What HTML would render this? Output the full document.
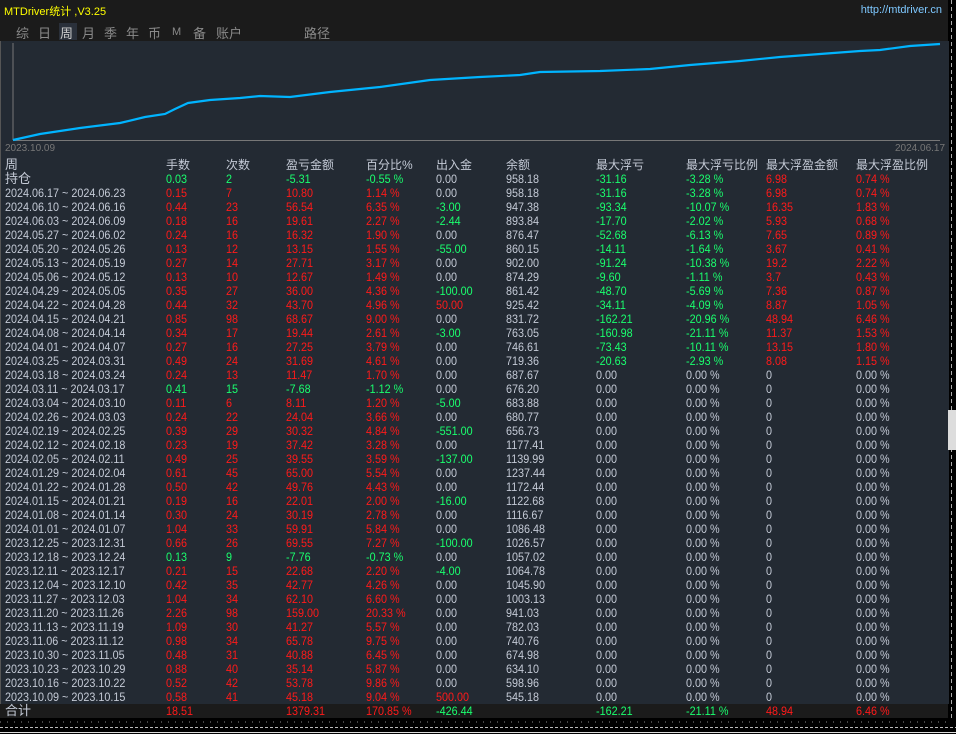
<!DOCTYPE html><html><head><meta charset="utf-8"><style>
body{margin:0;width:956px;height:734px;background:#000;overflow:hidden;font-family:"Liberation Sans","Noto Sans CJK SC",sans-serif;position:relative}
#top{position:absolute;left:0;top:0;width:948px;height:41px;background:#1b1b1b}
#ttl{position:absolute;left:4px;top:3px;color:#ffff00;font-size:11px}
#url{position:absolute;right:6px;top:4px;color:#7ec8ff;font-size:11px}
.tab{position:absolute;top:23px;color:#8a8a8a;font-size:13px}
#panel{position:absolute;left:0;top:41px;width:948px;height:663px;background:#232a33;border-left:1px solid #555}
table{position:absolute;left:5px;top:158px;border-collapse:collapse;table-layout:fixed}
td{height:14px;padding:0;white-space:nowrap;color:#c4cad6;font-size:12px;line-height:14px;overflow:visible}
td span{display:inline-block;transform:scaleX(.9);transform-origin:left center}
tr.h td{font-size:12px;color:#c4cad6}
.r{color:#ff1a1a}.g{color:#1aff6e}
#tot{position:absolute;left:0;top:704px;width:948px;height:14px;background:#1b1b1b}
</style></head><body>
<div id="top"><div id="ttl">MTDriver统计 ,V3.25</div><div id="url">http://mtdriver.cn</div>
<div style="position:absolute;left:59px;top:23px;width:18px;height:17px;background:#2a303a"></div>
<span class="tab" style="left:16px">综</span><span class="tab" style="left:38px">日</span><span class="tab" style="left:60px;color:#ccc">周</span><span class="tab" style="left:82px">月</span><span class="tab" style="left:104px">季</span><span class="tab" style="left:126px">年</span><span class="tab" style="left:148px">币</span><span class="tab" style="left:172px;font-size:11px;top:26px">M</span><span class="tab" style="left:193px">备</span><span class="tab" style="left:216px">账户</span><span class="tab" style="left:304px">路径</span>
</div>
<div id="panel"></div>
<svg style="position:absolute;left:0;top:41px" width="948" height="120">
<line x1="13" y1="2" x2="13" y2="99" stroke="#777"/><line x1="13" y1="99.5" x2="940" y2="99.5" stroke="#777"/>
<polyline fill="none" stroke="#00b4ff" stroke-width="2.2" points="13,99 40,93 80,87 120,82 145,76 165,73 175,68 188,62 210,59 240,57 260,55 290,56 330,51 380,46 430,39 480,36 520,34 540,31 600,30 650,28 690,24 740,20 780,16 820,13 860,10 880,9 910,5 940,3"/>
<text x="5" y="110" fill="#777" font-size="10" font-family="Liberation Sans">2023.10.09</text>
<text x="895" y="110" fill="#777" font-size="10" font-family="Liberation Sans">2024.06.17</text>
</svg>
<div id="tot"></div>
<table>
<colgroup><col style="width:161px"><col style="width:60px"><col style="width:60px"><col style="width:80px"><col style="width:70px"><col style="width:70px"><col style="width:90px"><col style="width:90px"><col style="width:80px"><col style="width:90px"><col style="width:90px"></colgroup>
<tr class="h"><td style="font-size:13px">周</td><td>手数</td><td>次数</td><td>盈亏金额</td><td>百分比%</td><td>出入金</td><td>余额</td><td>最大浮亏</td><td>最大浮亏比例</td><td>最大浮盈金额</td><td>最大浮盈比例</td></tr>
<tr><td style="font-size:13px">持仓</td><td class="g"><span>0.03</span></td><td class="g"><span>2</span></td><td class="g"><span>-5.31</span></td><td class="g"><span>-0.55 %</span></td><td><span>0.00</span></td><td><span>958.18</span></td><td class="g"><span>-31.16</span></td><td class="g"><span>-3.28 %</span></td><td class="r"><span>6.98</span></td><td class="r"><span>0.74 %</span></td></tr>
<tr><td><span>2024.06.17 ~ 2024.06.23</span></td><td class="r"><span>0.15</span></td><td class="r"><span>7</span></td><td class="r"><span>10.80</span></td><td class="r"><span>1.14 %</span></td><td><span>0.00</span></td><td><span>958.18</span></td><td class="g"><span>-31.16</span></td><td class="g"><span>-3.28 %</span></td><td class="r"><span>6.98</span></td><td class="r"><span>0.74 %</span></td></tr>
<tr><td><span>2024.06.10 ~ 2024.06.16</span></td><td class="r"><span>0.44</span></td><td class="r"><span>23</span></td><td class="r"><span>56.54</span></td><td class="r"><span>6.35 %</span></td><td class="g"><span>-3.00</span></td><td><span>947.38</span></td><td class="g"><span>-93.34</span></td><td class="g"><span>-10.07 %</span></td><td class="r"><span>16.35</span></td><td class="r"><span>1.83 %</span></td></tr>
<tr><td><span>2024.06.03 ~ 2024.06.09</span></td><td class="r"><span>0.18</span></td><td class="r"><span>16</span></td><td class="r"><span>19.61</span></td><td class="r"><span>2.27 %</span></td><td class="g"><span>-2.44</span></td><td><span>893.84</span></td><td class="g"><span>-17.70</span></td><td class="g"><span>-2.02 %</span></td><td class="r"><span>5.93</span></td><td class="r"><span>0.68 %</span></td></tr>
<tr><td><span>2024.05.27 ~ 2024.06.02</span></td><td class="r"><span>0.24</span></td><td class="r"><span>16</span></td><td class="r"><span>16.32</span></td><td class="r"><span>1.90 %</span></td><td><span>0.00</span></td><td><span>876.47</span></td><td class="g"><span>-52.68</span></td><td class="g"><span>-6.13 %</span></td><td class="r"><span>7.65</span></td><td class="r"><span>0.89 %</span></td></tr>
<tr><td><span>2024.05.20 ~ 2024.05.26</span></td><td class="r"><span>0.13</span></td><td class="r"><span>12</span></td><td class="r"><span>13.15</span></td><td class="r"><span>1.55 %</span></td><td class="g"><span>-55.00</span></td><td><span>860.15</span></td><td class="g"><span>-14.11</span></td><td class="g"><span>-1.64 %</span></td><td class="r"><span>3.67</span></td><td class="r"><span>0.41 %</span></td></tr>
<tr><td><span>2024.05.13 ~ 2024.05.19</span></td><td class="r"><span>0.27</span></td><td class="r"><span>14</span></td><td class="r"><span>27.71</span></td><td class="r"><span>3.17 %</span></td><td><span>0.00</span></td><td><span>902.00</span></td><td class="g"><span>-91.24</span></td><td class="g"><span>-10.38 %</span></td><td class="r"><span>19.2</span></td><td class="r"><span>2.22 %</span></td></tr>
<tr><td><span>2024.05.06 ~ 2024.05.12</span></td><td class="r"><span>0.13</span></td><td class="r"><span>10</span></td><td class="r"><span>12.67</span></td><td class="r"><span>1.49 %</span></td><td><span>0.00</span></td><td><span>874.29</span></td><td class="g"><span>-9.60</span></td><td class="g"><span>-1.11 %</span></td><td class="r"><span>3.7</span></td><td class="r"><span>0.43 %</span></td></tr>
<tr><td><span>2024.04.29 ~ 2024.05.05</span></td><td class="r"><span>0.35</span></td><td class="r"><span>27</span></td><td class="r"><span>36.00</span></td><td class="r"><span>4.36 %</span></td><td class="g"><span>-100.00</span></td><td><span>861.42</span></td><td class="g"><span>-48.70</span></td><td class="g"><span>-5.69 %</span></td><td class="r"><span>7.36</span></td><td class="r"><span>0.87 %</span></td></tr>
<tr><td><span>2024.04.22 ~ 2024.04.28</span></td><td class="r"><span>0.44</span></td><td class="r"><span>32</span></td><td class="r"><span>43.70</span></td><td class="r"><span>4.96 %</span></td><td class="r"><span>50.00</span></td><td><span>925.42</span></td><td class="g"><span>-34.11</span></td><td class="g"><span>-4.09 %</span></td><td class="r"><span>8.87</span></td><td class="r"><span>1.05 %</span></td></tr>
<tr><td><span>2024.04.15 ~ 2024.04.21</span></td><td class="r"><span>0.85</span></td><td class="r"><span>98</span></td><td class="r"><span>68.67</span></td><td class="r"><span>9.00 %</span></td><td><span>0.00</span></td><td><span>831.72</span></td><td class="g"><span>-162.21</span></td><td class="g"><span>-20.96 %</span></td><td class="r"><span>48.94</span></td><td class="r"><span>6.46 %</span></td></tr>
<tr><td><span>2024.04.08 ~ 2024.04.14</span></td><td class="r"><span>0.34</span></td><td class="r"><span>17</span></td><td class="r"><span>19.44</span></td><td class="r"><span>2.61 %</span></td><td class="g"><span>-3.00</span></td><td><span>763.05</span></td><td class="g"><span>-160.98</span></td><td class="g"><span>-21.11 %</span></td><td class="r"><span>11.37</span></td><td class="r"><span>1.53 %</span></td></tr>
<tr><td><span>2024.04.01 ~ 2024.04.07</span></td><td class="r"><span>0.27</span></td><td class="r"><span>16</span></td><td class="r"><span>27.25</span></td><td class="r"><span>3.79 %</span></td><td><span>0.00</span></td><td><span>746.61</span></td><td class="g"><span>-73.43</span></td><td class="g"><span>-10.11 %</span></td><td class="r"><span>13.15</span></td><td class="r"><span>1.80 %</span></td></tr>
<tr><td><span>2024.03.25 ~ 2024.03.31</span></td><td class="r"><span>0.49</span></td><td class="r"><span>24</span></td><td class="r"><span>31.69</span></td><td class="r"><span>4.61 %</span></td><td><span>0.00</span></td><td><span>719.36</span></td><td class="g"><span>-20.63</span></td><td class="g"><span>-2.93 %</span></td><td class="r"><span>8.08</span></td><td class="r"><span>1.15 %</span></td></tr>
<tr><td><span>2024.03.18 ~ 2024.03.24</span></td><td class="r"><span>0.24</span></td><td class="r"><span>13</span></td><td class="r"><span>11.47</span></td><td class="r"><span>1.70 %</span></td><td><span>0.00</span></td><td><span>687.67</span></td><td><span>0.00</span></td><td><span>0.00 %</span></td><td><span>0</span></td><td><span>0.00 %</span></td></tr>
<tr><td><span>2024.03.11 ~ 2024.03.17</span></td><td class="g"><span>0.41</span></td><td class="g"><span>15</span></td><td class="g"><span>-7.68</span></td><td class="g"><span>-1.12 %</span></td><td><span>0.00</span></td><td><span>676.20</span></td><td><span>0.00</span></td><td><span>0.00 %</span></td><td><span>0</span></td><td><span>0.00 %</span></td></tr>
<tr><td><span>2024.03.04 ~ 2024.03.10</span></td><td class="r"><span>0.11</span></td><td class="r"><span>6</span></td><td class="r"><span>8.11</span></td><td class="r"><span>1.20 %</span></td><td class="g"><span>-5.00</span></td><td><span>683.88</span></td><td><span>0.00</span></td><td><span>0.00 %</span></td><td><span>0</span></td><td><span>0.00 %</span></td></tr>
<tr><td><span>2024.02.26 ~ 2024.03.03</span></td><td class="r"><span>0.24</span></td><td class="r"><span>22</span></td><td class="r"><span>24.04</span></td><td class="r"><span>3.66 %</span></td><td><span>0.00</span></td><td><span>680.77</span></td><td><span>0.00</span></td><td><span>0.00 %</span></td><td><span>0</span></td><td><span>0.00 %</span></td></tr>
<tr><td><span>2024.02.19 ~ 2024.02.25</span></td><td class="r"><span>0.39</span></td><td class="r"><span>29</span></td><td class="r"><span>30.32</span></td><td class="r"><span>4.84 %</span></td><td class="g"><span>-551.00</span></td><td><span>656.73</span></td><td><span>0.00</span></td><td><span>0.00 %</span></td><td><span>0</span></td><td><span>0.00 %</span></td></tr>
<tr><td><span>2024.02.12 ~ 2024.02.18</span></td><td class="r"><span>0.23</span></td><td class="r"><span>19</span></td><td class="r"><span>37.42</span></td><td class="r"><span>3.28 %</span></td><td><span>0.00</span></td><td><span>1177.41</span></td><td><span>0.00</span></td><td><span>0.00 %</span></td><td><span>0</span></td><td><span>0.00 %</span></td></tr>
<tr><td><span>2024.02.05 ~ 2024.02.11</span></td><td class="r"><span>0.49</span></td><td class="r"><span>25</span></td><td class="r"><span>39.55</span></td><td class="r"><span>3.59 %</span></td><td class="g"><span>-137.00</span></td><td><span>1139.99</span></td><td><span>0.00</span></td><td><span>0.00 %</span></td><td><span>0</span></td><td><span>0.00 %</span></td></tr>
<tr><td><span>2024.01.29 ~ 2024.02.04</span></td><td class="r"><span>0.61</span></td><td class="r"><span>45</span></td><td class="r"><span>65.00</span></td><td class="r"><span>5.54 %</span></td><td><span>0.00</span></td><td><span>1237.44</span></td><td><span>0.00</span></td><td><span>0.00 %</span></td><td><span>0</span></td><td><span>0.00 %</span></td></tr>
<tr><td><span>2024.01.22 ~ 2024.01.28</span></td><td class="r"><span>0.50</span></td><td class="r"><span>42</span></td><td class="r"><span>49.76</span></td><td class="r"><span>4.43 %</span></td><td><span>0.00</span></td><td><span>1172.44</span></td><td><span>0.00</span></td><td><span>0.00 %</span></td><td><span>0</span></td><td><span>0.00 %</span></td></tr>
<tr><td><span>2024.01.15 ~ 2024.01.21</span></td><td class="r"><span>0.19</span></td><td class="r"><span>16</span></td><td class="r"><span>22.01</span></td><td class="r"><span>2.00 %</span></td><td class="g"><span>-16.00</span></td><td><span>1122.68</span></td><td><span>0.00</span></td><td><span>0.00 %</span></td><td><span>0</span></td><td><span>0.00 %</span></td></tr>
<tr><td><span>2024.01.08 ~ 2024.01.14</span></td><td class="r"><span>0.30</span></td><td class="r"><span>24</span></td><td class="r"><span>30.19</span></td><td class="r"><span>2.78 %</span></td><td><span>0.00</span></td><td><span>1116.67</span></td><td><span>0.00</span></td><td><span>0.00 %</span></td><td><span>0</span></td><td><span>0.00 %</span></td></tr>
<tr><td><span>2024.01.01 ~ 2024.01.07</span></td><td class="r"><span>1.04</span></td><td class="r"><span>33</span></td><td class="r"><span>59.91</span></td><td class="r"><span>5.84 %</span></td><td><span>0.00</span></td><td><span>1086.48</span></td><td><span>0.00</span></td><td><span>0.00 %</span></td><td><span>0</span></td><td><span>0.00 %</span></td></tr>
<tr><td><span>2023.12.25 ~ 2023.12.31</span></td><td class="r"><span>0.66</span></td><td class="r"><span>26</span></td><td class="r"><span>69.55</span></td><td class="r"><span>7.27 %</span></td><td class="g"><span>-100.00</span></td><td><span>1026.57</span></td><td><span>0.00</span></td><td><span>0.00 %</span></td><td><span>0</span></td><td><span>0.00 %</span></td></tr>
<tr><td><span>2023.12.18 ~ 2023.12.24</span></td><td class="g"><span>0.13</span></td><td class="g"><span>9</span></td><td class="g"><span>-7.76</span></td><td class="g"><span>-0.73 %</span></td><td><span>0.00</span></td><td><span>1057.02</span></td><td><span>0.00</span></td><td><span>0.00 %</span></td><td><span>0</span></td><td><span>0.00 %</span></td></tr>
<tr><td><span>2023.12.11 ~ 2023.12.17</span></td><td class="r"><span>0.21</span></td><td class="r"><span>15</span></td><td class="r"><span>22.68</span></td><td class="r"><span>2.20 %</span></td><td class="g"><span>-4.00</span></td><td><span>1064.78</span></td><td><span>0.00</span></td><td><span>0.00 %</span></td><td><span>0</span></td><td><span>0.00 %</span></td></tr>
<tr><td><span>2023.12.04 ~ 2023.12.10</span></td><td class="r"><span>0.42</span></td><td class="r"><span>35</span></td><td class="r"><span>42.77</span></td><td class="r"><span>4.26 %</span></td><td><span>0.00</span></td><td><span>1045.90</span></td><td><span>0.00</span></td><td><span>0.00 %</span></td><td><span>0</span></td><td><span>0.00 %</span></td></tr>
<tr><td><span>2023.11.27 ~ 2023.12.03</span></td><td class="r"><span>1.04</span></td><td class="r"><span>34</span></td><td class="r"><span>62.10</span></td><td class="r"><span>6.60 %</span></td><td><span>0.00</span></td><td><span>1003.13</span></td><td><span>0.00</span></td><td><span>0.00 %</span></td><td><span>0</span></td><td><span>0.00 %</span></td></tr>
<tr><td><span>2023.11.20 ~ 2023.11.26</span></td><td class="r"><span>2.26</span></td><td class="r"><span>98</span></td><td class="r"><span>159.00</span></td><td class="r"><span>20.33 %</span></td><td><span>0.00</span></td><td><span>941.03</span></td><td><span>0.00</span></td><td><span>0.00 %</span></td><td><span>0</span></td><td><span>0.00 %</span></td></tr>
<tr><td><span>2023.11.13 ~ 2023.11.19</span></td><td class="r"><span>1.09</span></td><td class="r"><span>30</span></td><td class="r"><span>41.27</span></td><td class="r"><span>5.57 %</span></td><td><span>0.00</span></td><td><span>782.03</span></td><td><span>0.00</span></td><td><span>0.00 %</span></td><td><span>0</span></td><td><span>0.00 %</span></td></tr>
<tr><td><span>2023.11.06 ~ 2023.11.12</span></td><td class="r"><span>0.98</span></td><td class="r"><span>34</span></td><td class="r"><span>65.78</span></td><td class="r"><span>9.75 %</span></td><td><span>0.00</span></td><td><span>740.76</span></td><td><span>0.00</span></td><td><span>0.00 %</span></td><td><span>0</span></td><td><span>0.00 %</span></td></tr>
<tr><td><span>2023.10.30 ~ 2023.11.05</span></td><td class="r"><span>0.48</span></td><td class="r"><span>31</span></td><td class="r"><span>40.88</span></td><td class="r"><span>6.45 %</span></td><td><span>0.00</span></td><td><span>674.98</span></td><td><span>0.00</span></td><td><span>0.00 %</span></td><td><span>0</span></td><td><span>0.00 %</span></td></tr>
<tr><td><span>2023.10.23 ~ 2023.10.29</span></td><td class="r"><span>0.88</span></td><td class="r"><span>40</span></td><td class="r"><span>35.14</span></td><td class="r"><span>5.87 %</span></td><td><span>0.00</span></td><td><span>634.10</span></td><td><span>0.00</span></td><td><span>0.00 %</span></td><td><span>0</span></td><td><span>0.00 %</span></td></tr>
<tr><td><span>2023.10.16 ~ 2023.10.22</span></td><td class="r"><span>0.52</span></td><td class="r"><span>42</span></td><td class="r"><span>53.78</span></td><td class="r"><span>9.86 %</span></td><td><span>0.00</span></td><td><span>598.96</span></td><td><span>0.00</span></td><td><span>0.00 %</span></td><td><span>0</span></td><td><span>0.00 %</span></td></tr>
<tr><td><span>2023.10.09 ~ 2023.10.15</span></td><td class="r"><span>0.58</span></td><td class="r"><span>41</span></td><td class="r"><span>45.18</span></td><td class="r"><span>9.04 %</span></td><td class="r"><span>500.00</span></td><td><span>545.18</span></td><td><span>0.00</span></td><td><span>0.00 %</span></td><td><span>0</span></td><td><span>0.00 %</span></td></tr>
<tr><td style="font-size:13px">合计</td><td class="r"><span>18.51</span></td><td></td><td class="r"><span>1379.31</span></td><td class="r"><span>170.85 %</span></td><td class="g"><span>-426.44</span></td><td></td><td class="g"><span>-162.21</span></td><td class="g"><span>-21.11 %</span></td><td class="r"><span>48.94</span></td><td class="r"><span>6.46 %</span></td></tr>
</table>
<svg style="position:absolute;left:0;top:718px" width="956" height="16">
<line x1="0" y1="4" x2="948" y2="4" stroke="#888" stroke-dasharray="1,6"/>
<line x1="0" y1="9.5" x2="956" y2="9.5" stroke="#bbb" stroke-dasharray="3,2"/>
<line x1="0" y1="14.5" x2="956" y2="14.5" stroke="#ddd"/>
</svg>
<svg style="position:absolute;left:948px;top:0" width="8" height="718">
<line x1="3.5" y1="0" x2="3.5" y2="718" stroke="#aaa" stroke-dasharray="4,3"/>
<rect x="0" y="410" width="8" height="40" fill="#ddd"/>
</svg>
</body></html>
